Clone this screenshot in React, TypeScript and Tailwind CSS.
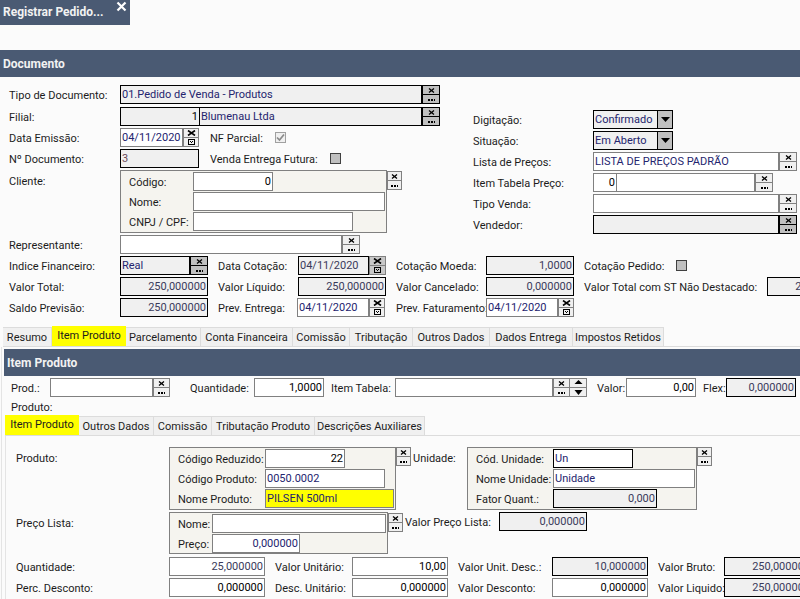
import type { ReactNode } from "react"

type Tone = "edit" | "locked" | "focus" | "yellow"

const toneClass: Record<Tone, string> = {
  edit: "bg-white border-[#808080]",
  locked: "bg-[#f0f0f0] border-black",
  focus: "bg-white border-black",
  yellow: "bg-[#ffff00] border-[#808080]",
}

function Label({ className = "", children }: { className?: string; children: ReactNode }) {
  return <span className={`flex h-[19px] shrink-0 items-center whitespace-nowrap pt-[2px] text-[#1c1c1c] ${className}`}>{children}</span>
}

function Input({
  className = "",
  tone = "edit",
  right = false,
  ink = "text-black",
  children,
}: {
  className?: string
  tone?: Tone
  right?: boolean
  ink?: string
  children?: ReactNode
}) {
  return (
    <div
      className={`flex h-[19px] shrink-0 items-center overflow-hidden whitespace-nowrap border px-[1px] pb-[1px] ${toneClass[tone]} ${ink} ${right ? "justify-end" : ""} ${className}`}
    >
      {children}
    </div>
  )
}

function Cell({ dark, children }: { dark: boolean; children: ReactNode }) {
  return (
    <div className={`flex flex-1 items-center justify-center border-b last:border-b-0 ${dark ? "border-black" : "border-[#808080]"}`}>
      {children}
    </div>
  )
}

function Lookup({ dark = false, className = "w-[18px]" }: { dark?: boolean; className?: string }) {
  return (
    <div className={`flex h-[19px] shrink-0 flex-col border ${dark ? "border-black bg-[#c0c0c0]" : "border-[#808080] bg-[#f0f0f0]"} ${className}`}>
      <Cell dark={dark}>
        <svg width="7" height="5" viewBox="0 0 7 5">
          <path d="M1 0.5 6 4.5M6 0.5 1 4.5" stroke="#000" strokeWidth="1.3" />
        </svg>
      </Cell>
      <Cell dark={dark}>
        <svg width="7" height="3" viewBox="0 0 7 3">
          <path d="M0 1h2v2H0zM3 1h2v2H3zM6 1h1v2H6z" fill="#000" />
        </svg>
      </Cell>
    </div>
  )
}

function DateBtn({ dark = false, className = "w-[17px]" }: { dark?: boolean; className?: string }) {
  return (
    <div className={`flex h-[19px] shrink-0 flex-col border ${dark ? "border-[#808080] bg-[#c8c8c8]" : "border-[#808080] bg-[#f0f0f0]"} ${className}`}>
      <Cell dark={false}>
        <svg width="9" height="6" viewBox="0 0 9 6">
          <path d="M1 0.5 8 5.5M8 0.5 1 5.5" stroke="#000" strokeWidth="1.6" />
        </svg>
      </Cell>
      <Cell dark={false}>
        <svg width="7" height="6" viewBox="0 0 7 6">
          <rect x="0.5" y="0.5" width="6" height="5" fill="none" stroke="#000" />
          <path d="M2 2h1v1H2zM4 2h1v1H4zM3 3h1v1H3z" fill="#000" />
        </svg>
      </Cell>
    </div>
  )
}

function Arrows() {
  return (
    <div className="flex h-[19px] w-[17px] shrink-0 flex-col border border-l-0 border-[#808080] bg-[#f0f0f0]">
      <Cell dark={false}>
        <svg width="9" height="6" viewBox="0 0 9 6">
          <path d="M4.5 0 8.5 4H0.5Z" fill="#000" />
        </svg>
      </Cell>
      <Cell dark={false}>
        <svg width="9" height="6" viewBox="0 0 9 6">
          <path d="M0.5 1H8.5L4.5 6Z" fill="#000" />
        </svg>
      </Cell>
    </div>
  )
}

function SelectBox({ children }: { children: ReactNode }) {
  return (
    <div className="flex h-[19px] w-[80px] shrink-0 border border-black bg-[#f0f0f0]">
      <span className="flex flex-1 items-center pb-[1px] pl-[1px] text-[#24246e]">{children}</span>
      <div className="flex w-[15px] items-center justify-center border-l border-black bg-[#c0c0c0]">
        <svg width="9" height="5" viewBox="0 0 9 5">
          <path d="M0 0H9L4.5 5Z" fill="#000" />
        </svg>
      </div>
    </div>
  )
}

function Check({ checked = false }: { checked?: boolean }) {
  if (checked) {
    return (
      <div className="flex h-[11px] w-[11px] shrink-0 items-center justify-center border border-[#a0a0a0] bg-[#f0f0f0]">
        <svg width="9" height="9" viewBox="0 0 9 9">
          <path d="M1 4.5 3.5 7 8 1.5" fill="none" stroke="#8a8a8a" strokeWidth="1.7" />
        </svg>
      </div>
    )
  }
  return <div className="h-[11px] w-[11px] shrink-0 border border-[#404040] bg-[#c0c0c0]" />
}

function Row({ className = "", children }: { className?: string; children: ReactNode }) {
  return <div className={`flex h-[19px] shrink-0 items-center ${className}`}>{children}</div>
}

function Panel({ className = "", children }: { className?: string; children: ReactNode }) {
  return (
    <div className={`flex shrink-0 flex-col gap-[1px] border border-[#808080] bg-[#f5f4ef] pl-[8px] pt-[1px] ${className}`}>{children}</div>
  )
}

const mainTabs = [
  { name: "Resumo", w: "w-[49px]" },
  { name: "Item Produto", w: "w-[74px]", active: true },
  { name: "Parcelamento", w: "w-[75px]" },
  { name: "Conta Financeira", w: "w-[92px]" },
  { name: "Comissão", w: "w-[57px]" },
  { name: "Tributação", w: "w-[63px]" },
  { name: "Outros Dados", w: "w-[77px]" },
  { name: "Dados Entrega", w: "w-[83px]" },
  { name: "Impostos Retidos", w: "w-[91px]" },
]

const subTabs = [
  { name: "Item Produto", w: "w-[74px]", active: true },
  { name: "Outros Dados", w: "w-[75px]" },
  { name: "Comissão", w: "w-[58px]" },
  { name: "Tributação Produto", w: "w-[103px]" },
  { name: "Descrições Auxiliares", w: "w-[110px]" },
]

function Tabs({ items, className = "" }: { items: { name: string; w: string; active?: boolean }[]; className?: string }) {
  return (
    <div className={`flex h-[22px] shrink-0 items-end border-b border-[#dcdcdc] ${className}`}>
      {items.map((tab) =>
        tab.active ? (
          <div key={tab.name} className={`flex h-[20px] shrink-0 items-start justify-center bg-[#ffff00] pt-[4px] ${tab.w}`}>
            {tab.name}
          </div>
        ) : (
          <div key={tab.name} className={`flex h-[19px] shrink-0 items-center justify-center whitespace-nowrap border-r border-t border-[#dcdcdc] bg-[#f0f0f0] ${tab.w}`}>
            {tab.name}
          </div>
        ),
      )}
    </div>
  )
}

function Bar({ className = "", children }: { className?: string; children: ReactNode }) {
  return <div className={`flex h-[27px] shrink-0 items-center bg-[#4a5a73] pl-[3px] text-[12px] font-bold text-[#f2f2f2] ${className}`}>{children}</div>
}

const navy = "text-[#24246e]"
const slate = "text-[#3a3a5a]"

export default function App() {
  return (
    <div
      className="flex h-[599px] w-[800px] flex-col overflow-hidden bg-[#fbfbfb] text-[11px] leading-none text-[#1c1c1c]"
      style={{ fontFamily: 'Roboto, "Liberation Sans", sans-serif' }}
    >
      {/* aba da janela */}
      <div className="flex h-[25px] w-[130px] shrink-0 items-start justify-between bg-[#4a5a73] pl-[3px] pr-[2px] text-[12px] font-bold text-[#f2f2f2]">
        <span className="pt-[6px]">Registrar Pedido...</span>
        <svg width="11" height="11" viewBox="0 0 11 11" className="mr-[1px] mt-[1px]">
          <path d="M1.5 1.5 9.5 9.5M9.5 1.5 1.5 9.5" stroke="#fff" strokeWidth="2.2" />
        </svg>
      </div>

      <Bar className="mt-[25px]">Documento</Bar>

      <div className="mt-[8px] flex shrink-0 pl-[9px]">
        <div className="flex w-[464px] shrink-0 flex-col gap-[2px]">
          <Row className="mb-[1px]">
            <Label className="w-[111px]">Tipo de Documento:</Label>
            <Input className="w-[302px]" tone="locked" ink={navy}>01.Pedido de Venda - Produtos</Input>
            <Lookup dark />
          </Row>
          <Row>
            <Label className="w-[111px]">Filial:</Label>
            <Input className="w-[80px]" tone="locked" right>1</Input>
            <Input className="-ml-[1px] w-[223px]" tone="locked" ink={navy}>Blumenau Ltda</Input>
            <Lookup dark />
          </Row>
          <Row>
            <Label className="w-[111px]">Data Emissão:</Label>
            <Input className="w-[63px]" tone="edit" ink={navy}>04/11/2020</Input>
            <DateBtn className="w-[16px]" />
            <Label className="ml-[11px] w-[65px]">NF Parcial:</Label>
            <Check checked />
          </Row>
          <Row>
            <Label className="w-[111px]">Nº Documento:</Label>
            <Input className="w-[79px]" tone="locked" ink="text-[#6a4a5a]">3</Input>
            <Label className="ml-[11px] w-[120px]">Venda Entrega Futura:</Label>
            <Check />
          </Row>
          <div className="flex h-[63px] shrink-0 items-start">
            <Label className="mt-[1px] w-[111px]">Cliente:</Label>
            <Panel className="h-[63px] w-[267px]">
              <Row>
                <Label className="w-[64px]">Código:</Label>
                <Input className="w-[80px]" right>0</Input>
              </Row>
              <Row>
                <Label className="w-[64px]">Nome:</Label>
                <Input className="w-[192px]" />
              </Row>
              <Row>
                <Label className="w-[64px]">CNPJ / CPF:</Label>
                <Input className="w-[160px]" />
              </Row>
            </Panel>
            <Lookup className="mt-[1px] w-[15px]" />
          </div>
          <Row>
            <Label className="w-[111px]">Representante:</Label>
            <Input className="w-[222px]" />
            <Lookup />
          </Row>
        </div>

        <div className="flex flex-col gap-[2px] pt-[25px]">
          <Row>
            <Label className="w-[120px]">Digitação:</Label>
            <SelectBox>Confirmado</SelectBox>
          </Row>
          <Row>
            <Label className="w-[120px]">Situação:</Label>
            <SelectBox>Em Aberto</SelectBox>
          </Row>
          <Row>
            <Label className="w-[120px]">Lista de Preços:</Label>
            <Input className="w-[186px]" ink={navy}>LISTA DE PREÇOS PADRÃO</Input>
            <Lookup />
          </Row>
          <Row>
            <Label className="w-[120px]">Item Tabela Preço:</Label>
            <Input className="w-[24px]" right>0</Input>
            <Input className="-ml-[1px] w-[139px]" />
            <Lookup />
          </Row>
          <Row>
            <Label className="w-[120px]">Tipo Venda:</Label>
            <Input className="w-[186px]" />
            <Lookup />
          </Row>
          <Row>
            <Label className="w-[120px]">Vendedor:</Label>
            <Input className="w-[186px]" tone="locked" />
            <Lookup dark />
          </Row>
        </div>
      </div>

      <div className="mt-[2px] flex shrink-0 flex-col gap-[2px] pl-[9px]">
        <Row>
          <Label className="w-[111px]">Indice Financeiro:</Label>
          <Input className="w-[70px]" tone="locked" ink={navy}>Real</Input>
          <Lookup dark />
          <Label className="ml-[10px] w-[80px]">Data Cotação:</Label>
          <Input className="w-[71px]" tone="locked" ink={slate}>04/11/2020</Input>
          <DateBtn dark />
          <Label className="ml-[10px] w-[90px]">Cotação Moeda:</Label>
          <Input className="w-[88px]" tone="locked" right ink={slate}>1,0000</Input>
          <Label className="ml-[10px] w-[92px]">Cotação Pedido:</Label>
          <Check />
        </Row>
        <Row>
          <Label className="w-[111px]">Valor Total:</Label>
          <Input className="w-[88px]" tone="locked" right ink={slate}>250,000000</Input>
          <Label className="ml-[10px] w-[80px]">Valor Líquido:</Label>
          <Input className="w-[88px]" tone="locked" right ink={slate}>250,000000</Input>
          <Label className="ml-[10px] w-[90px]">Valor Cancelado:</Label>
          <Input className="w-[88px]" tone="locked" right ink={slate}>0,000000</Input>
          <Label className="ml-[10px] w-[183px]">Valor Total com ST Não Destacado:</Label>
          <Input className="w-[88px]" tone="locked" right ink={slate}>250,000000</Input>
        </Row>
        <Row>
          <Label className="w-[111px]">Saldo Previsão:</Label>
          <Input className="w-[88px]" tone="locked" right ink={slate}>250,000000</Input>
          <Label className="ml-[10px] w-[79px]">Prev. Entrega:</Label>
          <Input className="w-[72px]" ink={navy}>04/11/2020</Input>
          <DateBtn className="w-[16px]" />
          <Label className="ml-[11px] w-[90px]">Prev. Faturamento:</Label>
          <Input className="w-[72px]" ink={navy}>04/11/2020</Input>
          <DateBtn className="w-[16px]" />
        </Row>
      </div>

      <Tabs items={mainTabs} className="ml-[3px] mt-[8px]" />

      <div className="ml-[1px] flex flex-1 flex-col border-l border-[#e4e4e4] pt-[2px]">
        <Bar className="ml-[2px] shrink-0">Item Produto</Bar>

        <Row className="ml-[9px] mt-[2px]">
          <Label className="w-[39px]">Prod.:</Label>
          <Input className="w-[103px]" />
          <Lookup className="w-[17px]" />
          <Label className="ml-[20px] w-[64px]">Quantidade:</Label>
          <Input className="w-[70px]" right>1,0000</Input>
          <Label className="ml-[7px] w-[64px]">Item Tabela:</Label>
          <Input className="w-[158px]" />
          <Lookup className="w-[17px]" />
          <Arrows />
          <Label className="ml-[10px] w-[29px]">Valor:</Label>
          <Input className="w-[70px]" right>0,00</Input>
          <Label className="ml-[7px] w-[23px]">Flex:</Label>
          <Input className="w-[70px]" tone="locked" right ink={slate}>0,000000</Input>
        </Row>
        <Label className="-mb-[2px] ml-[9px]">Produto:</Label>

        <Tabs items={subTabs} className="ml-[3px]" />

        <div className="ml-[3px] flex flex-1 flex-col border-l border-[#e4e4e4] pl-[10px] pt-[11px]">
          <div className="flex h-[63px] shrink-0 items-start">
            <Label className="mt-[1px] w-[153px]">Produto:</Label>
            <Panel className="h-[63px] w-[227px]">
              <Row>
                <Label className="w-[87px]">Código Reduzido:</Label>
                <Input className="w-[80px]" right>22</Input>
              </Row>
              <Row>
                <Label className="w-[87px]">Código Produto:</Label>
                <Input className="w-[120px]" ink={navy}>0050.0002</Input>
              </Row>
              <Row>
                <Label className="w-[87px]">Nome Produto:</Label>
                <Input className="w-[129px]" tone="yellow" ink={navy}>PILSEN 500ml</Input>
              </Row>
            </Panel>
            <Lookup className="w-[15px]" />
            <Label className="ml-[2px] mt-[1px] w-[54px]">Unidade:</Label>
            <Panel className="h-[63px] w-[230px]">
              <Row>
                <Label className="w-[77px]">Cód. Unidade:</Label>
                <Input className="w-[80px]" tone="focus" ink={navy}>Un</Input>
              </Row>
              <Row>
                <Label className="w-[77px]">Nome Unidade:</Label>
                <Input className="w-[142px]" ink={navy}>Unidade</Input>
              </Row>
              <Row>
                <Label className="w-[77px]">Fator Quant.:</Label>
                <Input className="w-[104px]" tone="locked" right ink={slate}>0,000</Input>
              </Row>
            </Panel>
            <Lookup className="w-[15px]" />
          </div>

          <div className="mt-[2px] flex h-[42px] shrink-0 items-start">
            <Label className="mt-[1px] w-[153px]">Preço Lista:</Label>
            <Panel className="h-[42px] w-[219px]">
              <Row>
                <Label className="w-[34px]">Nome:</Label>
                <Input className="w-[174px]" />
              </Row>
              <Row>
                <Label className="w-[34px]">Preço:</Label>
                <Input className="w-[88px]" right ink={navy}>0,000000</Input>
              </Row>
            </Panel>
            <Lookup className="mt-[1px] w-[15px]" />
            <Label className="ml-[2px] w-[94px]">Valor Preço Lista:</Label>
            <Input className="w-[88px]" tone="locked" right ink={slate}>0,000000</Input>
          </div>

          <Row className="mt-[3px]">
            <Label className="w-[153px]">Quantidade:</Label>
            <Input className="w-[96px]" right ink={slate}>25,000000</Input>
            <Label className="ml-[10px] w-[77px]">Valor Unitário:</Label>
            <Input className="w-[96px]" right>10,00</Input>
            <Label className="ml-[10px] w-[94px]">Valor Unit. Desc.:</Label>
            <Input className="w-[96px]" tone="locked" right ink={slate}>10,000000</Input>
            <Label className="ml-[10px] w-[66px]">Valor Bruto:</Label>
            <Input className="w-[88px]" tone="locked" right ink={slate}>250,000000</Input>
          </Row>
          <Row className="mt-[2px]">
            <Label className="w-[153px]">Perc. Desconto:</Label>
            <Input className="w-[96px]" right>0,000000</Input>
            <Label className="ml-[10px] w-[77px]">Desc. Unitário:</Label>
            <Input className="w-[96px]" right>0,000000</Input>
            <Label className="ml-[10px] w-[94px]">Valor Desconto:</Label>
            <Input className="w-[96px]" right>0,000000</Input>
            <Label className="ml-[10px] w-[66px]">Valor Liquido:</Label>
            <Input className="w-[88px]" tone="locked" right ink={slate}>250,000000</Input>
          </Row>
        </div>
      </div>
    </div>
  )
}
